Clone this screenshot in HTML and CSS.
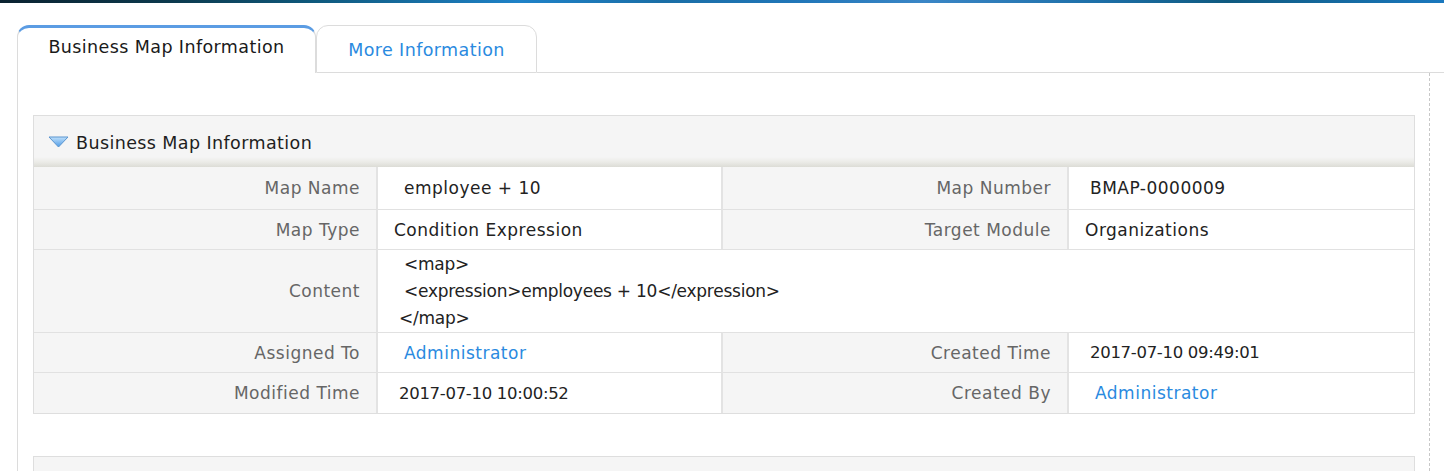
FILE: index.html
```html
<!DOCTYPE html>
<html lang="en">
<head>
<meta charset="utf-8">
<title>Business Map Information</title>
<link rel="stylesheet" href="styles.css">
</head>
<body>
<div class="topbar"></div>
<div class="page">
  <div class="tabs">
    <div class="tab active">Business Map Information</div>
    <div class="tab other">More Information</div>
    <div class="tab-fill"></div>
  </div>
  <div class="content">
    <section class="panel">
      <div class="panel-head">
        <svg class="caret" width="21" height="12" viewBox="0 0 21 12">
          <defs>
            <linearGradient id="cg" x1="0" y1="0" x2="0" y2="1">
              <stop offset="0" stop-color="#bfe0fb"/>
              <stop offset="1" stop-color="#4f9be6"/>
            </linearGradient>
          </defs>
          <path d="M1 1 H20 L10.5 11 Z" fill="url(#cg)" stroke="#5a95cf" stroke-width="1" stroke-linejoin="round"/>
        </svg>
        <span class="panel-title">Business Map Information</span>
      </div>
      <div class="grid">
        <div class="lbl first">Map Name</div>
        <div class="val first ind2">employee + 10</div>
        <div class="lbl first">Map Number</div>
        <div class="val first end ind1">BMAP-0000009</div>

        <div class="lbl">Map Type</div>
        <div class="val">Condition Expression</div>
        <div class="lbl">Target Module</div>
        <div class="val end">Organizations</div>

        <div class="lbl">Content</div>
        <div class="val wide code">
          <div class="ind2">&lt;map&gt;</div>
          <div class="ind2">&lt;expression&gt;employees + 10&lt;/expression&gt;</div>
          <div class="ind1">&lt;/map&gt;</div>
        </div>

        <div class="lbl">Assigned To</div>
        <div class="val ind2"><a class="link" href="#">Administrator</a></div>
        <div class="lbl">Created Time</div>
        <div class="val end ind1 num">2017-07-10 09:49:01</div>

        <div class="lbl last">Modified Time</div>
        <div class="val last ind1 num">2017-07-10 10:00:52</div>
        <div class="lbl last">Created By</div>
        <div class="val last end ind2"><a class="link" href="#">Administrator</a></div>
      </div>
    </section>
    <section class="panel next"></section>
  </div>
</div>
</body>
</html>
```
FILE: styles.css
```css
html, body {
  margin: 0;
  padding: 0;
  background: #ffffff;
  font-family: "DejaVu Sans", "Liberation Sans", sans-serif;
  color: #222;
  overflow: hidden;
}
.topbar {
  height: 3px;
  background: linear-gradient(to right, #0b2230 0%, #0c3a4e 12%, #0f5a7e 22%, #1f82c8 36%, #1a6ea6 46%, #2076b8 55%, #3a86c6 64%, #1d6fa8 76%, #0f5a80 85%, #1a78be 100%);
}
.page {
  padding: 22px 0 0 17px;
}
.tabs {
  display: flex;
  align-items: flex-end;
  height: 48px;
}
.tab {
  box-sizing: border-box;
  height: 48px;
  border: 1px solid #dcdcdc;
  border-radius: 12px 12px 0 0;
  font-size: 17.5px;
  letter-spacing: 0.4px;
  display: flex;
  justify-content: center;
}
.tab.active {
  width: 299px;
  border-top: 3px solid #5b9ce3;
  border-bottom: none;
  color: #1a1a1a;
  padding-top: 9px;
  background: #fff;
}
.tab.other {
  width: 221px;
  color: #2a8ae0;
  padding-top: 14px;
}
.tab-fill {
  flex: 1;
  border-bottom: 1px solid #dcdcdc;
}
.content {
  margin-right: 14px;
  border-left: 1px solid #dcdcdc;
  border-right: 1px dashed #c8c8c8;
  padding: 42px 14px 0 15px;
  height: 356px;
  overflow: hidden;
}
.panel {
  border: 1px solid #dedede;
  background: #f5f5f5;
}
.panel-head {
  height: 51px;
  display: flex;
  align-items: center;
  padding-left: 14px;
  background: linear-gradient(to bottom, #f5f5f5 0, #f5f5f5 41px, #ebebe7 46px, #dcdcd6 51px);
}
.caret {
  margin-right: 7px;
  margin-top: 1px;
}
.panel-title {
  font-size: 17.5px;
  letter-spacing: 0.4px;
  color: #1e1e1e;
  padding-top: 3px;
}
.grid {
  display: grid;
  grid-template-columns: 344px 345px 346px 1fr;
  background: #fff;
}
.lbl, .val {
  box-sizing: border-box;
  border-top: 1px solid #e1e1e1;
  min-height: 40px;
  display: flex;
  align-items: center;
  font-size: 17px;
  letter-spacing: 0.5px;
  white-space: nowrap;
}
.lbl {
  background: #f5f5f5;
  color: #666;
  justify-content: flex-end;
  padding-right: 16px;
  border-right: 2px solid #e3e3e3;
}
.val {
  background: #fff;
  color: #222;
  padding-left: 16px;
  border-right: 2px solid #e3e3e3;
}
.val.num {
  font-size: 16.5px;
  letter-spacing: -0.3px;
}
.lbl.first, .val.first {
  border-top: none;
  min-height: 42px;
}
.lbl.last, .val.last {
  min-height: 41px;
}
.val.end {
  border-right: none;
}
.val.wide {
  grid-column: 2 / 5;
  border-right: none;
  flex-direction: column;
  align-items: flex-start;
  justify-content: center;
  line-height: 27px;
  min-height: 83px;
}
.val.code {
  letter-spacing: -0.25px;
}
.ind1 { padding-left: 21px; }
.ind2 { padding-left: 26px; }
.val.wide .ind1 { padding-left: 5px; }
.val.wide .ind2 { padding-left: 10px; }
.link {
  color: #2a8ae0;
  text-decoration: none;
}
.panel.next {
  margin-top: 42px;
  height: 40px;
}
```
